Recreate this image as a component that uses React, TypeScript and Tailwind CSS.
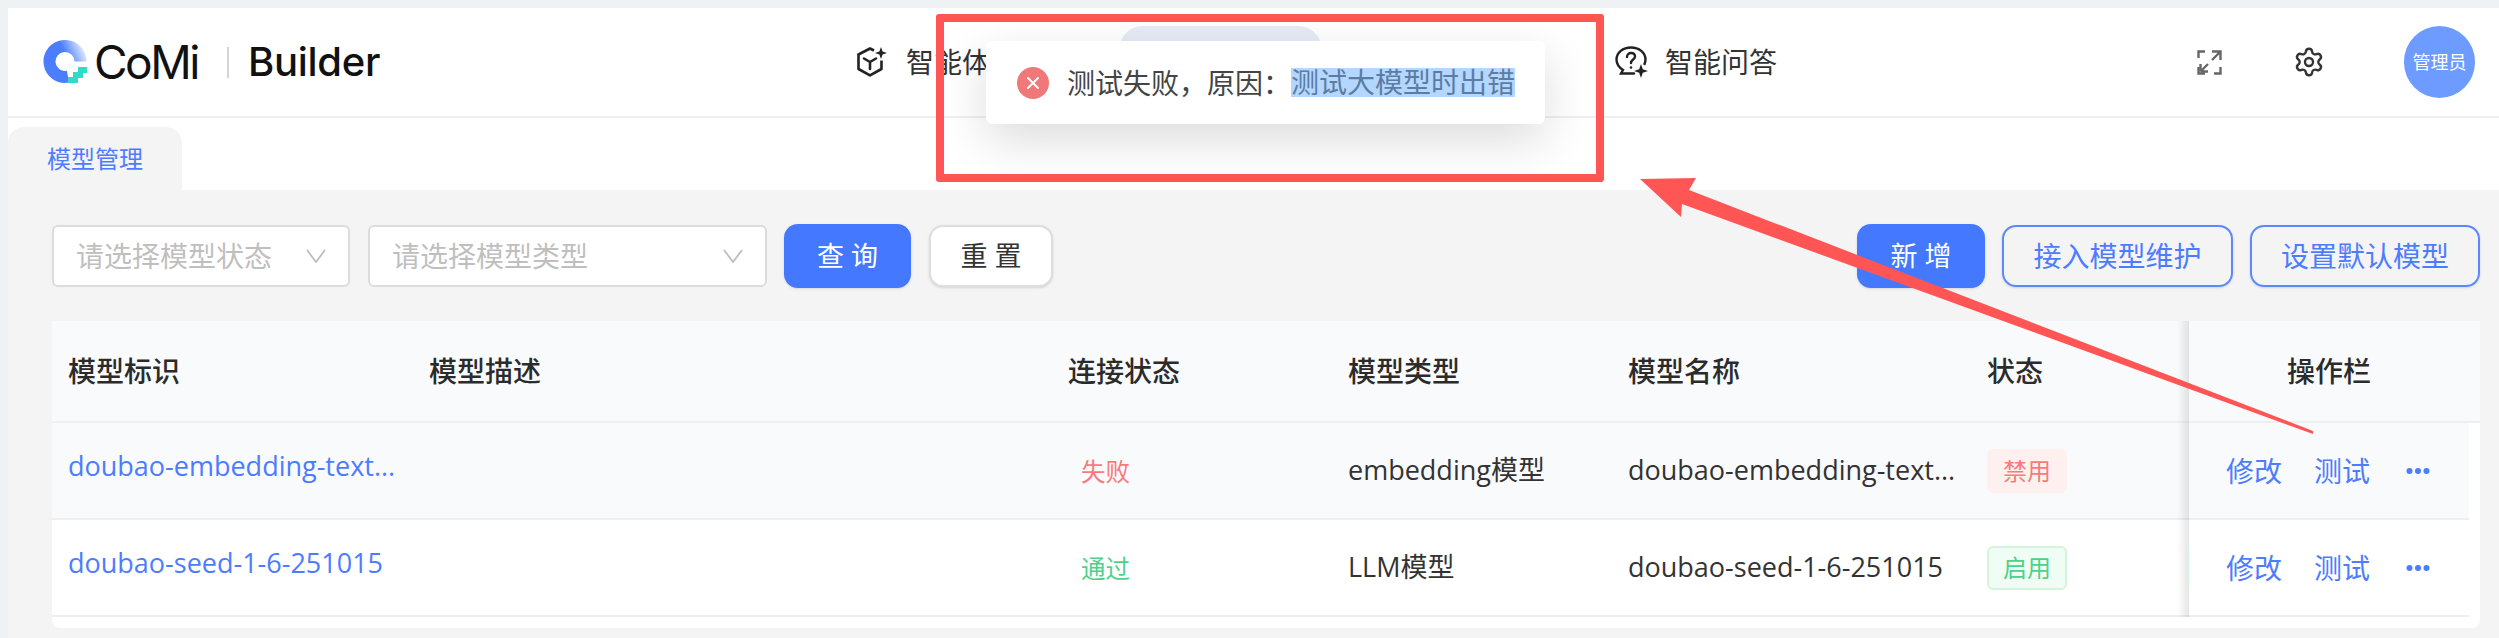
import React from 'react';
import { Settings } from 'lucide-react';

const rowGrid = 'grid grid-cols-[360px_639px_280px_280px_359px_219px_280px] items-center';

const Logo = () => (
  <div className="flex items-center">
    <svg width="45" height="45" viewBox="0 0 45 45" className="mr-[7px] shrink-0">
      <defs>
        <linearGradient id="ringFade" x1="10" y1="24" x2="42" y2="10" gradientUnits="userSpaceOnUse">
          <stop offset="0.45" stopColor="#4a7dff" />
          <stop offset="1" stopColor="#dfe8ff" />
        </linearGradient>
      </defs>
      <path d="M26 36.7 A15.5 15.5 0 1 1 38.5 21.5" fill="none" stroke="url(#ringFade)" strokeWidth="12" />
      <path d="M26 43 L26 37 L31 37 L31 32 L36 32 L36 27 L45 27 L45 33 L41 33 L41 38 L36 38 L36 43 Z" fill="#2fdcc8" />
    </svg>
    <span className="font-['Inter',sans-serif] text-[46px] leading-none font-normal tracking-[-2.5px] text-[#111] w-[107px]">CoMi</span>
    <span className="w-[2px] h-[31px] bg-[#d4d4d4] ml-[26px] mr-[19px]" />
    <span className="font-['Inter',sans-serif] text-[40px] leading-none font-medium tracking-[-0.3px] text-[#111] w-[131px] whitespace-nowrap">Builder</span>
  </div>
);

const AgentIcon = () => (
  <svg width="32" height="32" viewBox="0 0 32 32" fill="none" stroke="#222" strokeWidth="2.6" strokeLinejoin="round">
    <path d="M19 4.5 L15 2.5 L3.5 8.5 V23 L15 29.5 L26.5 23 V14.5" />
    <path d="M9 12.5 L15 16 L21 12.5 M15 16 V23" strokeLinecap="round" />
    <path d="M26 1 L27.6 5.4 L32 7 L27.6 8.6 L26 13 L24.4 8.6 L20 7 L24.4 5.4 Z" fill="#222" stroke="none" />
  </svg>
);

const QuestionIcon = () => (
  <svg width="34" height="32" viewBox="0 0 34 32" fill="none" stroke="#222" strokeWidth="2.4" strokeLinecap="round">
    <path d="M19 27.5 H6 L8 24 C3.5 21 1.5 17 1.5 13.5 C1.5 6.5 8 1.5 16 1.5 C24 1.5 30.5 6.5 30.5 13.5 C30.5 15 30 16.5 29.5 18" />
    <path d="M12 11 C12 8.5 14 7 16 7 C18.5 7 20 8.5 20 10.5 C20 13.5 16 13.5 16 17" />
    <circle cx="16" cy="21.5" r="1.3" fill="#222" stroke="none" />
    <path d="M26 18 L27.8 23.2 L33 25 L27.8 26.8 L26 32 L24.2 26.8 L19 25 L24.2 23.2 Z" fill="#222" stroke="none" />
  </svg>
);

const FullscreenIcon = () => (
  <svg width="25" height="25" viewBox="0 0 25 25" fill="none" stroke="#666" strokeWidth="2.4">
    <path d="M8 1.5 H1.5 V8 M1.5 17 V23.5 H8 M17 23.5 H23.5 V17" />
    <path d="M15 1.5 H23.5 V10 M23.5 1.5 L15 10 M3.5 21.5 V14 M3.5 21.5 H11 M3.5 21.5 L11 14" />
  </svg>
);

const Chevron = () => (
  <svg width="20" height="14" viewBox="0 0 20 14" fill="none" stroke="#bdbdbd" strokeWidth="1.8">
    <path d="M1 1 L10 13 L19 1" />
  </svg>
);

const SelectBox = ({ placeholder, width }: { placeholder: string; width: string }) => (
  <div className={`${width} h-[62px] bg-white border-2 border-[#dcdcdc] rounded-md flex items-center justify-between pl-[22px] pr-[22px] text-[28px] text-[#bfbfbf]`}>
    <span>{placeholder}</span>
    <Chevron />
  </div>
);

const Tag = ({ label, tone }: { label: string; tone: 'red' | 'green' }) => (
  <span
    className={
      tone === 'red'
        ? 'w-[80px] h-[44px] flex items-center justify-center rounded-md border-2 border-[#fff0f0] bg-[#fff0f0] text-[24px] text-[#f47c7c]'
        : 'w-[80px] h-[44px] flex items-center justify-center rounded-md border-2 border-[#d3f5de] bg-[#f0fdf4] text-[24px] text-[#4fd18b]'
    }
  >
    {label}
  </span>
);

const Actions = () => (
  <div className="flex items-center gap-[32px] pl-[37px] text-[28px] text-[#4d7cff]">
    <span>修改</span>
    <span>测试</span>
    <svg width="24" height="8" viewBox="0 0 24 8" fill="#4d7cff" className="ml-[4px]">
      <circle cx="3.5" cy="4" r="3" />
      <circle cx="12" cy="4" r="3" />
      <circle cx="20.5" cy="4" r="3" />
    </svg>
  </div>
);

// 固定列左侧的阴影
const FixedShadow = () => (
  <span className="absolute left-[-12px] top-0 bottom-[-2px] w-[12px] bg-gradient-to-l from-black/10 to-transparent" />
);

const rows = [
  {
    id: 'doubao-embedding-text...',
    status: '失败',
    statusColor: 'text-[#f87b7b]',
    type: 'embedding模型',
    name: 'doubao-embedding-text...',
    tag: '禁用',
    tone: 'red' as const,
    bg: 'bg-[#f9fafc]',
  },
  {
    id: 'doubao-seed-1-6-251015',
    status: '通过',
    statusColor: 'text-[#4fd18b]',
    type: 'LLM模型',
    name: 'doubao-seed-1-6-251015',
    tag: '启用',
    tone: 'green' as const,
    bg: 'bg-white',
  },
];

export default function App() {
  return (
    <div className="relative w-[2499px] h-[638px] overflow-hidden bg-[#eef2f5] pl-[8px] pt-[8px] font-['Open_Sans','Noto_Sans_CJK_SC',sans-serif] text-[#333]">
      {/* 顶部导航 */}
      <header className="h-[110px] bg-white border-b-2 border-[#eeeff3] flex items-center pl-[34px] pr-[24px]">
        <Logo />
        <nav className="flex items-center text-[28px] ml-[476px]">
          <div className="flex items-center gap-[19px] w-[135px]">
            <AgentIcon />
            <span className="whitespace-nowrap">智能体</span>
          </div>
          <div className="w-[201px] h-[72px] rounded-[22px] bg-[#e6ebf6] ml-[130px]" />
          <div className="flex items-center gap-[16px] ml-[294px]">
            <QuestionIcon />
            <span>智能问答</span>
          </div>
        </nav>
        <div className="ml-auto flex items-center">
          <FullscreenIcon />
          <Settings size={32} strokeWidth={1.8} color="#333" className="ml-[71px] mr-[79px]" />
          <div className="w-[71px] h-[72px] rounded-full bg-[#6e9bff] text-white text-[18px] flex items-center justify-center">管理员</div>
        </div>
      </header>

      {/* 标签栏 */}
      <div className="h-[72px] bg-white pt-[9px]">
        <div className="w-[174px] h-[63px] rounded-t-[16px] bg-[#f4f4f5] flex items-center justify-center text-[24px] text-[#4d7cff]">模型管理</div>
      </div>

      {/* 内容 */}
      <main className="h-[448px] bg-[#f4f4f5] pl-[44px] pr-[19px] pt-[35px]">
        <div className="flex items-center h-[62px]">
          <SelectBox placeholder="请选择模型状态" width="w-[298px]" />
          <div className="ml-[18px]">
            <SelectBox placeholder="请选择模型类型" width="w-[399px]" />
          </div>
          <button className="ml-[17px] w-[127px] h-[64px] rounded-[14px] bg-[#4478ff] text-white text-[27px] shadow-sm">查 询</button>
          <button className="ml-[18px] w-[124px] h-[62px] rounded-[14px] bg-white border-2 border-[#dedede] text-[27px] shadow-sm">重 置</button>
          <button className="ml-auto w-[128px] h-[64px] rounded-[14px] bg-[#4478ff] text-white text-[27px] shadow-sm">新 增</button>
          <button className="ml-[17px] w-[231px] h-[62px] rounded-[14px] border-2 border-[#5b87ff] text-[#4d7cff] text-[28px] shadow-sm">接入模型维护</button>
          <button className="ml-[17px] w-[230px] h-[62px] rounded-[14px] border-2 border-[#5b87ff] text-[#4d7cff] text-[28px] shadow-sm">设置默认模型</button>
        </div>

        {/* 表格 */}
        <div className="mt-[34px] h-[307px] bg-white rounded-b-lg">
          <div className={`${rowGrid} h-[102px] bg-[#f9fafc] border-b-2 border-[#eeeff1] text-[28px] font-medium text-[#2b2b2b]`}>
            <div className="pl-[16px]">模型标识</div>
            <div className="pl-[17px]">模型描述</div>
            <div className="pl-[17px]">连接状态</div>
            <div className="pl-[17px]">模型类型</div>
            <div className="pl-[17px]">模型名称</div>
            <div className="pl-[17px]">状态</div>
            <div className="relative h-full flex items-center justify-center">
              <FixedShadow />
              操作栏
            </div>
          </div>
          {rows.map((row) => (
            <div key={row.id} className={`${rowGrid} w-[2417px] h-[97px] ${row.bg} border-b-2 border-[#eeeff1] text-[27px]`}>
              <div className="pl-[16px] pb-[8px] text-[#4d7cff] whitespace-nowrap">{row.id}</div>
              <div />
              <div className={`pl-[30px] pt-[4px] text-[24.5px] ${row.statusColor}`}>{row.status}</div>
              <div className="pl-[17px] whitespace-nowrap">{row.type}</div>
              <div className="pl-[17px] whitespace-nowrap">{row.name}</div>
              <div className="pl-[17px]">
                <Tag label={row.tag} tone={row.tone} />
              </div>
              <div className={`relative h-full flex items-center ${row.bg}`}>
                <FixedShadow />
                {row.tone === 'green' && <span className="absolute left-[-2px] top-[26px] w-[2px] h-[43px] bg-[#d3f5de]" />}
                <Actions />
              </div>
            </div>
          ))}
        </div>
      </main>

      {/* 提示框 */}
      <div className="absolute left-[986px] top-[41px] w-[559px] h-[83px] bg-white rounded-md shadow-[0_16px_48px_rgba(0,0,0,0.14)] flex items-center pl-[31px] text-[28px] text-[#444]">
        <span className="w-[32px] h-[32px] rounded-full bg-[#f07878] flex items-center justify-center mr-[18px]">
          <svg width="14" height="14" viewBox="0 0 14 14" stroke="#fff" strokeWidth="2" strokeLinecap="round">
            <path d="M2 2 L12 12 M12 2 L2 12" />
          </svg>
        </span>
        <span className="whitespace-nowrap">测试失败，原因：</span>
        <span className="inline-block h-[29px] leading-[29px] bg-[#b3d7ff] text-[#5b7da3] whitespace-nowrap">测试大模型时出错</span>
      </div>

      {/* 标注 */}
      <div className="absolute left-[936px] top-[14px] w-[668px] h-[168px] border-[8px] border-[#ff5555] rounded-[3px]" />
      <svg className="absolute inset-0 pointer-events-none" width="2499" height="638" viewBox="0 0 2499 638">
        <polygon points="1640,179 1696,178 1689,190 2313,431 2313,434 1682,204 1681,217" fill="#ff5555" />
      </svg>
    </div>
  );
}
